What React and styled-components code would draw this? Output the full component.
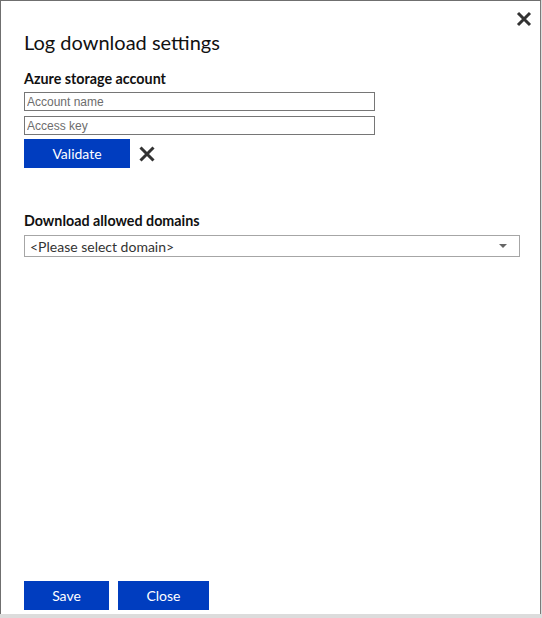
import React from 'react';
import styled, { createGlobalStyle } from 'styled-components';

const Global = createGlobalStyle`
  html, body {
    margin: 0;
    padding: 0;
    background: #dcdcdc;
    font-family: Lato, "Noto Sans", sans-serif;
  }
`;

const Page = styled.div`
  width: 542px;
  height: 618px;
  overflow: hidden;
`;

const Dialog = styled.div`
  position: relative;
  box-sizing: border-box;
  width: 541px;
  height: 614px;
  background: #fff;
  border-top: 1px solid #6f6f6f;
  border-left: 1px solid #6f6f6f;
  border-right: 1px solid #7a7a7a;
  padding: 0 0 4px 23px;
  display: flex;
  flex-direction: column;
`;

const CloseIcon = styled.button`
  position: absolute;
  top: 10px;
  right: 8px;
  width: 16px;
  height: 16px;
  padding: 0;
  border: none;
  background: none;
  display: flex;
  align-items: center;
  justify-content: center;
  cursor: pointer;
`;

const Title = styled.h1`
  margin: 28px 0 0;
  font-size: 20px;
  font-weight: 400;
  line-height: 26px;
  color: #111;
`;

const Label = styled.div`
  margin-top: ${(p) => p.top || 0}px;
  font-size: 14.3px;
  font-weight: 700;
  line-height: 18px;
  color: #111;
`;

const Input = styled.input`
  box-sizing: border-box;
  display: block;
  width: 351px;
  height: 19px;
  margin-top: ${(p) => p.top || 0}px;
  padding: 0 2px;
  border: 1px solid #767676;
  font-family: "Liberation Sans", Arial, sans-serif;
  font-size: 12px;
  outline: none;
  &::placeholder { color: #6d6d6d; }
`;

const Row = styled.div`
  display: flex;
  align-items: center;
  gap: 9px;
  margin-top: 4px;
`;

const Button = styled.button`
  box-sizing: border-box;
  width: ${(p) => p.w}px;
  height: 29px;
  border: none;
  background: #003dbf;
  color: #fff;
  font-family: Lato, "Noto Sans", sans-serif;
  font-size: 14px;
  padding: 0;
  cursor: pointer;
`;

const IconButton = styled.span`
  display: flex;
  align-items: center;
  width: 16px;
  height: 16px;
`;

const Select = styled.div`
  box-sizing: border-box;
  width: 496px;
  height: 22px;
  margin-top: 5px;
  border: 1px solid #a6a6a6;
  padding: 0 12px 0 5px;
  display: flex;
  align-items: center;
  justify-content: space-between;
  font-size: 14px;
  color: #333;
`;

const Caret = styled.span`
  width: 0;
  height: 0;
  border-left: 4px solid transparent;
  border-right: 4px solid transparent;
  border-top: 4px solid #666;
`;

const Footer = styled.div`
  margin-top: auto;
  display: flex;
  gap: 9px;
`;

const XMark = ({ inset }) => (
  <svg width="16" height="16" viewBox="0 0 16 16">
    <path
      d={`M${inset} ${inset} L${16 - inset} ${16 - inset} M${16 - inset} ${inset} L${inset} ${16 - inset}`}
      stroke="#333"
      strokeWidth="3"
    />
  </svg>
);

const App = () => (
  <Page>
    <Global />
    <Dialog>
      <CloseIcon aria-label="Close"><XMark inset={2} /></CloseIcon>
      <Title>Log download settings</Title>
      <Label top={15}>Azure storage account</Label>
      <Input top={4} placeholder="Account name" />
      <Input top={5} placeholder="Access key" />
      <Row>
        <Button w={106}>Validate</Button>
        <IconButton><XMark inset={1.5} /></IconButton>
      </Row>
      <Label top={44}>Download allowed domains</Label>
      <Select>
        <span>&lt;Please select domain&gt;</span>
        <Caret />
      </Select>
      <Footer>
        <Button w={85}>Save</Button>
        <Button w={91}>Close</Button>
      </Footer>
    </Dialog>
  </Page>
);

export default App;
